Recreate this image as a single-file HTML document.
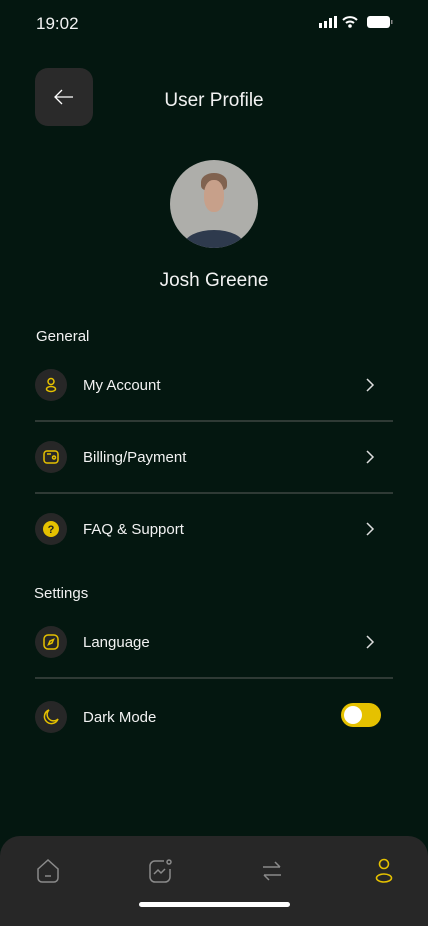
<!DOCTYPE html>
<html><head><meta charset="utf-8"><style>
*{margin:0;padding:0;box-sizing:border-box}
body{width:428px;height:926px;background:#041710;font-family:"Liberation Sans",sans-serif;color:#f2f2f2;position:relative;overflow:hidden}
.a{position:absolute}
.t{font-size:15px;white-space:nowrap}
.ic{position:absolute;left:35px;width:32px;height:32px;border-radius:50%;background:#272727;display:flex;align-items:center;justify-content:center}
.div{position:absolute;left:35px;width:358px;height:2px;background:#2f3a35}
.chev{position:absolute;left:364px}
</style></head><body>
<div class="a" style="left:36px;top:14px;font-size:17px">19:02</div>
<svg class="a" style="left:318px;top:15px" width="76" height="14" viewBox="0 0 76 14">
<rect x="1" y="8" width="3" height="5" fill="#fff"/><rect x="6" y="6" width="3" height="7" fill="#fff"/><rect x="11" y="3" width="3" height="10" fill="#fff"/><rect x="16" y="1" width="3" height="12" fill="#fff"/>
<path d="M25 5a10 10 0 0 1 14 0M28 8a6 6 0 0 1 8 0" stroke="#fff" stroke-width="2" fill="none"/><circle cx="32" cy="11" r="1.8" fill="#fff"/>
<rect x="49" y="1" width="23" height="12" rx="3" fill="#fff"/><rect x="73" y="5" width="1.5" height="4" fill="#888"/>
</svg>
<div class="a" style="left:35px;top:68px;width:58px;height:58px;border-radius:13px;background:#2a2a2a"></div>
<svg class="a" style="left:52px;top:87px" width="24" height="20" viewBox="0 0 24 20"><path d="M21 10H3M10 3L3 10l7 7" stroke="#fff" stroke-width="1.3" fill="none"/></svg>
<div class="a" style="left:0;width:428px;top:90px;text-align:center;font-size:19px">User Profile</div>
<div class="a" style="left:170px;top:160px;width:88px;height:88px;border-radius:50%;background:#aeaeaa;overflow:hidden">
<div class="a" style="left:31px;top:13px;width:26px;height:18px;border-radius:50% 50% 30% 30%;background:#80624f"></div>
<div class="a" style="left:34px;top:20px;width:20px;height:32px;border-radius:45%;background:#c7a08a"></div>
<div class="a" style="left:14px;top:70px;width:60px;height:30px;border-radius:50%;background:#2e3a4d"></div></div>
<div class="a" style="left:0;width:428px;top:270px;text-align:center;font-size:19px">Josh Greene</div>
<div class="a t" style="left:36px;top:328px">General</div>

<div class="ic" style="top:369px"><svg width="16" height="16" viewBox="0 0 16 16" fill="none" stroke="#e5c100" stroke-width="1.5"><circle cx="8" cy="4.5" r="3"/><ellipse cx="8" cy="12" rx="4.5" ry="2.5"/></svg></div>
<div class="a t" style="left:83px;top:377px">My Account</div>
<svg class="chev" style="top:377px" width="12" height="16" viewBox="0 0 12 16"><path d="M3 2l6 6-6 6" stroke="#ddd" stroke-width="1.5" fill="none"/></svg>
<div class="div" style="top:420px"></div>

<div class="ic" style="top:441px"><svg width="18" height="18" viewBox="0 0 18 18" fill="none" stroke="#e5c100" stroke-width="1.5"><rect x="2" y="3" width="14" height="12" rx="3"/><path d="M5 6h4"/><circle cx="12" cy="9.5" r="1.5"/></svg></div>
<div class="a t" style="left:83px;top:449px">Billing/Payment</div>
<svg class="chev" style="top:449px" width="12" height="16" viewBox="0 0 12 16"><path d="M3 2l6 6-6 6" stroke="#ddd" stroke-width="1.5" fill="none"/></svg>
<div class="div" style="top:492px"></div>

<div class="ic" style="top:513px"><svg width="18" height="18" viewBox="0 0 18 18"><circle cx="9" cy="9" r="8" fill="#e5c100"/><text x="9" y="13" text-anchor="middle" font-size="11" font-weight="bold" font-family="Liberation Sans" fill="#222">?</text></svg></div>
<div class="a t" style="left:83px;top:521px">FAQ &amp; Support</div>
<svg class="chev" style="top:521px" width="12" height="16" viewBox="0 0 12 16"><path d="M3 2l6 6-6 6" stroke="#ddd" stroke-width="1.5" fill="none"/></svg>

<div class="a t" style="left:34px;top:585px">Settings</div>
<div class="ic" style="top:626px"><svg width="18" height="18" viewBox="0 0 18 18" fill="none" stroke="#e5c100" stroke-width="1.5"><rect x="2" y="2" width="14" height="14" rx="4"/><path d="M11.5 6.5l-1.5 3.5-3.5 1.5 1.5-3.5z"/></svg></div>
<div class="a t" style="left:83px;top:634px">Language</div>
<svg class="chev" style="top:634px" width="12" height="16" viewBox="0 0 12 16"><path d="M3 2l6 6-6 6" stroke="#ddd" stroke-width="1.5" fill="none"/></svg>
<div class="div" style="top:677px"></div>

<div class="ic" style="top:701px"><svg width="18" height="18" viewBox="0 0 18 18" fill="none" stroke="#e5c100" stroke-width="1.5"><path d="M7 2a7 7 0 1 0 9 9A6 6 0 0 1 7 2z"/></svg></div>
<div class="a t" style="left:83px;top:709px">Dark Mode</div>
<div class="a" style="left:341px;top:703px;width:40px;height:24px;border-radius:12px;background:#e5c100"><div class="a" style="left:3px;top:3px;width:18px;height:18px;border-radius:50%;background:#fff"></div></div>

<div class="a" style="left:0;top:836px;width:428px;height:90px;background:#272727;border-radius:20px 20px 0 0"></div>
<svg class="a" style="left:34px;top:857px" width="28" height="28" viewBox="0 0 28 28" fill="none" stroke="#8a8a8a" stroke-width="1.5"><path d="M4 12l10-9 10 9v9a4 4 0 0 1-4 4H8a4 4 0 0 1-4-4z"/><path d="M11 19h6"/></svg>
<svg class="a" style="left:146px;top:857px" width="28" height="28" viewBox="0 0 28 28" fill="none" stroke="#8a8a8a" stroke-width="1.5"><path d="M18 4H9a5 5 0 0 0-5 5v11a5 5 0 0 0 5 5h10a5 5 0 0 0 5-5v-8"/><circle cx="23" cy="5" r="2"/><path d="M8 17l4-4 3 3 4-4"/></svg>
<svg class="a" style="left:258px;top:857px" width="28" height="28" viewBox="0 0 28 28" fill="none" stroke="#8a8a8a" stroke-width="1.5"><path d="M5 10h17M17 5l5 5M23 18H6M11 23l-5-5"/></svg>
<svg class="a" style="left:370px;top:857px" width="28" height="28" viewBox="0 0 28 28" fill="none" stroke="#e5c100" stroke-width="1.6"><circle cx="14" cy="7" r="4.5"/><ellipse cx="14" cy="21" rx="7.5" ry="4"/></svg>
<div class="a" style="left:139px;top:902px;width:151px;height:5px;border-radius:3px;background:#fff"></div>
</body></html>
